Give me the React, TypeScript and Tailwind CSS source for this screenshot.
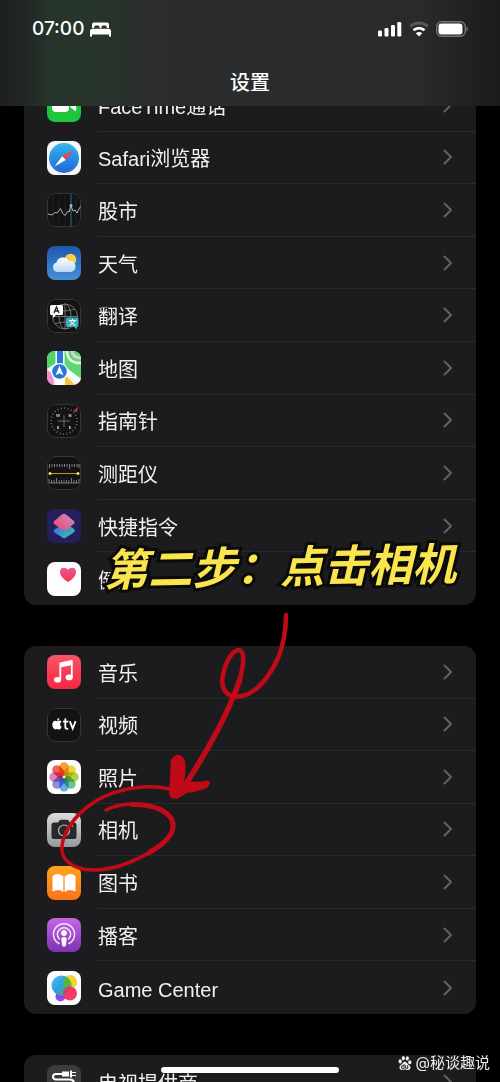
import type { ReactNode } from "react";
import { SiBaidu } from "react-icons/si";

function Tile({ children, className = "" }: { children?: ReactNode; className?: string }) {
  return (
    <svg viewBox="0 0 34 34" aria-hidden="true" className={`size-[34px] shrink-0 rounded-lg ${className}`}>
      {children}
    </svg>
  );
}

const darkTile = "bg-[#131314]";

const TileEdge = () => <rect x=".5" y=".5" width="33" height="33" rx="7.500" fill="none" stroke="#353538" />;

const FaceTimeIcon = () => (
  <Tile className="bg-[#1fc63d]">
    <rect x="5" y="9" width="17" height="15" rx="4" fill="#fff" />
    <path d="M23.500 14.500 28 11.200q1.200-.8 1.200.6v10.400q0 1.400-1.200.6l-4.500-3.300z" fill="#fff" />
  </Tile>
);

const SafariIcon = () => (
  <Tile className="bg-[#f5f6f8]">
    <defs>
      <linearGradient id="safari" x1="0" y1="0" x2="0" y2="1">
        <stop offset="0" stopColor="#35b6ec" />
        <stop offset="1" stopColor="#2263d8" />
      </linearGradient>
    </defs>
    <circle cx="17" cy="17" r="15" fill="url(#safari)" />
    <circle cx="17" cy="17" r="13.300" fill="none" stroke="#a8dcf8" strokeWidth="1" strokeDasharray=".5 1.200" opacity=".5" />
    <path d="M26.500 9.500 15.200 15.200l3.600 3.800z" fill="#f2424a" />
    <path d="M7.500 25.500 15.200 15.200l3.600 3.800z" fill="#fff" />
  </Tile>
);

const StocksIcon = () => (
  <Tile className={darkTile}>
    <path d="M6 2v30M12 2v30M18 2v30M29 2v30" stroke="#252527" strokeWidth=".8" />
    <TileEdge />
    <path d="M24 1v32" stroke="#2b7485" strokeWidth="1" />
    <path d="m1 21 2 .5L5 22l3-2.500 2 .5 3.500-4.500L15.500 20l2.500 2.500 3-4.500 1 1 2-6 2 5 2-1 2 3 2-4 1.500-2.500" fill="none" stroke="#b4b4b6" strokeWidth="1" strokeLinejoin="round" />
    <circle cx="24" cy="12.500" r="1.500" fill="#76c7dc" />
  </Tile>
);

const WeatherIcon = () => (
  <Tile>
    <defs>
      <linearGradient id="sky" x1="0" y1="0" x2="0" y2="1">
        <stop offset="0" stopColor="#1d58ab" />
        <stop offset="1" stopColor="#4591d8" />
      </linearGradient>
      <linearGradient id="cloud" x1="0" y1="0" x2="0" y2="1">
        <stop offset="0" stopColor="#fff" />
        <stop offset="1" stopColor="#b9d8f4" />
      </linearGradient>
    </defs>
    <rect width="34" height="34" fill="url(#sky)" />
    <circle cx="23.500" cy="13.500" r="5.800" fill="#f8d04c" />
    <path d="M10 26a4.900 4.900 0 0 1-.5-9.500 6.600 6.600 0 0 1 12.300-1.500 5.600 5.600 0 1 1 .2 11z" fill="url(#cloud)" />
  </Tile>
);

const TranslateIcon = () => (
  <Tile className={darkTile}>
    <TileEdge />
    <g fill="none" stroke="#77777a" strokeWidth=".9">
      <circle cx="18" cy="17.500" r="12.500" />
      <ellipse cx="18" cy="17.500" rx="6" ry="12.500" />
      <path d="M18 5v25M5.500 17.500h25M8 10q10 4 20 0M8 25q10-4 20 0" />
    </g>
    <path d="M4.500 6h10Q16 6 16 7.500v7q0 1.500-1.500 1.500H9l-3 3v-3H4.500Q3 16 3 14.500v-7Q3 6 4.500 6z" fill="#fafafa" />
    <path d="m7 14 2.500-6 2.500 6M8 12h3" fill="none" stroke="#222" strokeWidth="1.300" />
    <path d="M20.500 18.500h9.500q1.500 0 1.500 1.500v6.500q0 1.500-1.500 1.500v2.500L27 28h-6.500Q19 28 19 26.500V20q0-1.500 1.500-1.500z" fill="#3daebb" />
    <path d="M22 21.500h7M25.500 20v1.500M27.800 21.500q-1 3.300-5.300 4.800M23.200 21.500q1 3.300 5.300 4.800" fill="none" stroke="#fff" strokeWidth="1" />
  </Tile>
);

const MapsIcon = () => (
  <Tile className="bg-[#f3f4f2]">
    <path d="M0 0h9v12L0 18z" fill="#52d267" />
    <path d="M17 0h17v30L17 15z" fill="#5cd873" />
    <path d="M20-1q0 14 15 13" fill="none" stroke="#f3f4f2" strokeWidth="2.500" />
    <path d="M25-1q0 8 10 8" fill="none" stroke="#d0d4cf" strokeWidth="3" />
    <path d="M0 19q7 3 7 15H0z" fill="#ee8ecf" />
    <path d="m18 24 10 10H18z" fill="#f8c43e" />
    <path d="m15 16 20 15" stroke="#fff" strokeWidth="4" />
    <path d="M8.500 0h9v34h-9z" fill="#fff" />
    <path d="M10 0h6v20h-6z" fill="#2779de" />
    <circle cx="12.500" cy="20.500" r="8.500" fill="#fff" />
    <circle cx="12.500" cy="20.500" r="7.300" fill="#2675de" />
    <path d="m12.500 14.800 4 9.500-4-2-4 2z" fill="#fff" />
  </Tile>
);

const CompassIcon = () => (
  <Tile className={darkTile}>
    <TileEdge />
    <circle cx="17" cy="17" r="13" fill="none" stroke="#8a8a8d" strokeWidth="1.600" strokeDasharray=".8 2.600" />
    <path d="M17 11v12M11 17h12" stroke="#6d6d70" strokeWidth="1" />
    <path d="m26.500 7 4.500-4-1 5z" fill="#c93f38" />
    <g fill="#d2d2d4" fontSize="4" fontWeight="700" fontFamily="Inter, sans-serif" textAnchor="middle">
      <text x="11" y="12.500">W</text>
      <text x="23" y="12.500">N</text>
      <text x="11" y="25">S</text>
      <text x="23" y="25">E</text>
    </g>
  </Tile>
);

const MeasureIcon = () => (
  <Tile className={darkTile}>
    <TileEdge />
    <path d="M2.500 8v4M5 8v3M7.500 8v3M10 8v3M12.500 8v3M15 8v3M17.500 8v3M20 8v3M22.500 8v5M25 8v3M27.500 8v3M30 8v3M32 8v4" stroke="#8f8f91" strokeWidth=".9" />
    <path d="M2 27V23M4.500 27v-3M7 27v-3M9.500 27v-5M12 27v-3M14.500 27v-3M17 27v-3M19.500 27v-3M22 27v-3M24.500 27v-5M27 27v-3M29.500 27v-3M32 27v-4M2 27h30" stroke="#858588" strokeWidth=".9" />
    <path d="M3 17.500h28" stroke="#b5982f" strokeWidth="1" />
    <circle cx="3" cy="17.500" r="1.500" fill="#ffde46" />
    <circle cx="31" cy="17.500" r="1.500" fill="#ffde46" />
  </Tile>
);

const ShortcutsIcon = () => (
  <Tile className="bg-[#251f5c]">
    <defs>
      <linearGradient id="shortcutTop" x1="0" y1="1" x2="1" y2="0">
        <stop offset="0" stopColor="#ee4963" />
        <stop offset="1" stopColor="#d088ca" />
      </linearGradient>
      <linearGradient id="shortcutBottom" x1="0" y1="0" x2="1" y2="1">
        <stop offset="0" stopColor="#415ce5" />
        <stop offset="1" stopColor="#43c8b0" />
      </linearGradient>
    </defs>
    <path d="m15.500 28.600-8-5.200q-1.800-1.400 0-2.800L16 14.500l3-.5 8 6q1.800 1.600 0 3.200l-8 5.400q-1.800 1.200-3.500 0z" fill="url(#shortcutBottom)" />
    <path d="m15.500 20.700-8.300-5.800q-1.700-1.400 0-2.800l8-6.800q1.800-1.300 3.600 0l8 6.800q1.700 1.400 0 2.800l-8 5.800q-1.700 1.200-3.300 0z" fill="url(#shortcutTop)" />
  </Tile>
);

const HealthIcon = () => (
  <Tile className="bg-[#fdfdfd]">
    <defs>
      <linearGradient id="heart" x1="0" y1="0" x2="0" y2="1">
        <stop offset="0" stopColor="#f1559a" />
        <stop offset="1" stopColor="#ef3b42" />
      </linearGradient>
    </defs>
    <path d="M21 20q-8-5-8-9.800Q13 5.800 17 5.800q2.500 0 4 1.800 1.500-1.800 4-1.800 4 0 4 4.400 0 4.800-8 9.800z" fill="url(#heart)" />
  </Tile>
);

const MusicIcon = () => (
  <Tile>
    <defs>
      <linearGradient id="music" x1="0" y1="0" x2="0" y2="1">
        <stop offset="0" stopColor="#fb5568" />
        <stop offset="1" stopColor="#f52746" />
      </linearGradient>
    </defs>
    <rect width="34" height="34" fill="url(#music)" />
    <path d="M13.300 24V8.500l11.500-2.500v16" fill="none" stroke="#fff" strokeWidth="1.800" strokeLinejoin="round" />
    <path d="m13 8 12-2.500V10l-12 2.500z" fill="#fff" />
    <ellipse cx="10.600" cy="24.700" rx="3.600" ry="2.800" fill="#fff" />
    <ellipse cx="22.200" cy="22.400" rx="3.600" ry="2.800" fill="#fff" />
  </Tile>
);

const TvIcon = () => (
  <Tile className={darkTile}>
    <TileEdge />
    <path d="M10 13.200q1.200-.6 2.400-.6 1.200 0 2.100 1.100-1.500 1-1.400 2.700.1 1.600 1.600 2.400-.9 2.400-2.400 2.700-.8 0-1.900-.5-1.200-.2-2.200.5Q5.500 20.500 5.300 16.500q.2-3.500 2.900-3.800.8 0 1.800.5zM9.900 12.700q.1-2.400 2.600-2.900-.1 2.400-2.600 2.900z" fill="#fff" />
    <path d="M18.300 10.500v8q0 2.300 2 2.300h.9M16 13.700h5.200M22.800 13.200l2.900 7.300 2.900-7.300" fill="none" stroke="#fff" strokeWidth="1.800" />
  </Tile>
);

const petals = ["#f9a13a", "#f0db3c", "#b3d54a", "#6cc696", "#68b0e8", "#938fe0", "#dd86c0", "#f4605a"];

const PhotosIcon = () => (
  <Tile className="bg-[#fdfdfd]">
    {petals.map((color, i) => (
      <rect key={color} x="12.300" y="2.300" width="9.400" height="13.700" rx="4.700" fill={color} className="mix-blend-multiply" transform={`rotate(${i * 45} 17 17)`} />
    ))}
  </Tile>
);

const CameraIcon = () => (
  <Tile>
    <defs>
      <linearGradient id="camera" x1="0" y1="0" x2="0" y2="1">
        <stop offset="0" stopColor="#dcdcde" />
        <stop offset="1" stopColor="#98989c" />
      </linearGradient>
    </defs>
    <rect width="34" height="34" fill="url(#camera)" />
    <path d="M7 9.500h4l1.500-2q.5-.7 1.500-.7h6q1 0 1.500.7l1.500 2h4q2.500 0 2.500 2.500v11.500q0 2.500-2.500 2.500H7q-2.500 0-2.500-2.500V12Q4.500 9.500 7 9.500z" fill="#29292b" />
    <circle cx="17" cy="17.500" r="5.500" fill="none" stroke="#bdbdc0" strokeWidth="1.200" />
    <circle cx="25.500" cy="13" r=".8" fill="#e5b72c" />
  </Tile>
);

const BooksIcon = () => (
  <Tile>
    <defs>
      <linearGradient id="books" x1="0" y1="0" x2="0" y2="1">
        <stop offset="0" stopColor="#ffa51d" />
        <stop offset="1" stopColor="#f8731b" />
      </linearGradient>
    </defs>
    <rect width="34" height="34" fill="url(#books)" />
    <path d="M16.400 26V10.500Q14 8 11 8q-3.500 0-5.500 2.300v15.200q2.300-1.500 5.500-1.500 3 0 5.400 2zM17.600 26V10.500Q20 8 23 8q3.500 0 5.500 2.300v15.200Q26.200 24 23 24q-3 0-5.400 2z" fill="#fff" />
  </Tile>
);

const PodcastsIcon = () => (
  <Tile>
    <defs>
      <linearGradient id="podcasts" x1="0" y1="0" x2="0" y2="1">
        <stop offset="0" stopColor="#c367e4" />
        <stop offset="1" stopColor="#7c33b5" />
      </linearGradient>
    </defs>
    <rect width="34" height="34" fill="url(#podcasts)" />
    <g fill="none" stroke="#f5e3fb" strokeWidth="1.500" strokeLinecap="round">
      <path d="M12 25.500a10.500 10.500 0 1 1 10 0" />
      <path d="M12.300 21a6.600 6.600 0 1 1 9.400 0" />
    </g>
    <circle cx="17" cy="15" r="2.900" fill="#fff" />
    <path d="M14.300 20.500q0-1.500 2.700-1.500t2.700 1.500l-.7 6.500q-.2 1.700-2 1.700t-2-1.700z" fill="#fff" />
  </Tile>
);

const GameCenterIcon = () => (
  <Tile className="bg-[#fdfdfd]">
    <defs>
      <linearGradient id="bubble" x1="0" y1="0" x2="1" y2="1">
        <stop offset="0" stopColor="#49bdf5" />
        <stop offset=".5" stopColor="#339ddb" />
        <stop offset="1" stopColor="#46bb46" />
      </linearGradient>
      <linearGradient id="purple" x1="0" y1="0" x2="0" y2="1">
        <stop offset="0" stopColor="#5a4cdf" />
        <stop offset="1" stopColor="#b24bee" />
      </linearGradient>
    </defs>
    <circle cx="23" cy="11" r="7" fill="#f4d52d" />
    <circle cx="13.500" cy="25.500" r="5" fill="url(#purple)" />
    <circle cx="14.500" cy="14.500" r="10" fill="url(#bubble)" />
    <path d="M16.200 12.500a7 7 0 0 1 1.500-6q6.500 2.200 6.800 9-5.800 2.500-8.300-3z" fill="#57b832" />
    <circle cx="23" cy="22.500" r="7" fill="#f43c67" />
    <path d="M16 22.500a7 7 0 0 1 8-7q-1.500 7-7.500 8.700z" fill="#cc4463" />
  </Tile>
);

const TvProviderIcon = () => (
  <Tile className="bg-[#3b3b3e]">
    <path d="M17 9H9q-3 0-3 2.700T9 14.500h14q4 0 4 4" fill="none" stroke="#fff" strokeWidth="2" />
    <path d="M15 6.500h7v5h-7zM23 5.500h2v7h-2z" fill="#fff" />
    <path d="M25 7.500h4M25 10.500h4" stroke="#fff" strokeWidth="1" />
  </Tile>
);

type Item = { label: string; icon: ReactNode };

const systemApps: Item[] = [
  { label: "FaceTime通话", icon: <FaceTimeIcon /> },
  { label: "Safari浏览器", icon: <SafariIcon /> },
  { label: "股市", icon: <StocksIcon /> },
  { label: "天气", icon: <WeatherIcon /> },
  { label: "翻译", icon: <TranslateIcon /> },
  { label: "地图", icon: <MapsIcon /> },
  { label: "指南针", icon: <CompassIcon /> },
  { label: "测距仪", icon: <MeasureIcon /> },
  { label: "快捷指令", icon: <ShortcutsIcon /> },
  { label: "健康", icon: <HealthIcon /> },
];

const mediaApps: Item[] = [
  { label: "音乐", icon: <MusicIcon /> },
  { label: "视频", icon: <TvIcon /> },
  { label: "照片", icon: <PhotosIcon /> },
  { label: "相机", icon: <CameraIcon /> },
  { label: "图书", icon: <BooksIcon /> },
  { label: "播客", icon: <PodcastsIcon /> },
  { label: "Game Center", icon: <GameCenterIcon /> },
];

const providers: Item[] = [{ label: "电视提供商", icon: <TvProviderIcon /> }];

function Group({ items, className }: { items: Item[]; className: string }) {
  return (
    <ul className={`grid shrink-0 auto-rows-fr overflow-hidden rounded-xl bg-[#1c1c1e] ${className}`}>
      {items.map((item, i) => (
        <li key={item.label} className="grid">
          <a href="#" className="flex items-center gap-[17px] pl-[23px]">
            {item.icon}
            <span
              className={`flex flex-1 items-center justify-between self-stretch pr-[23px] font-['Liberation_Sans','Noto_Sans_CJK_SC',sans-serif] text-[20px] leading-6 text-[#f0f0f1] ${
                i < items.length - 1 ? "border-b border-[#2a2a2c]" : ""
              }`}
            >
              <span className="pt-1">{item.label}</span>
              <svg viewBox="0 0 10 16" aria-hidden="true" className="h-4 w-2.5 text-[#626266]">
                <path d="m1.500 1.500 6.500 6.500-6.500 6.500" fill="none" stroke="currentColor" strokeWidth="2" strokeLinecap="round" strokeLinejoin="round" />
              </svg>
            </span>
          </a>
        </li>
      ))}
    </ul>
  );
}

function StatusBar() {
  return (
    <div className="flex items-center justify-between px-8 pt-[17px]">
      <div className="flex items-center gap-1.5">
        <time className="text-[19px] leading-6 font-medium">07:00</time>
        <svg viewBox="0 0 21 15" aria-hidden="true" className="h-[15px] w-[21px]" fill="#fff">
          <path d="M2 6V2.500Q2 .5 4 .5h13q2 0 2 2V6h-2.200V5q0-1.500-1.500-1.500h-2.500q-1.300 0-1.300 1.500v1h-2V5q0-1.500-1.300-1.500H5.700Q4.200 3.500 4.200 5v1z" />
          <path d="M2.500 6.800h16Q21 6.800 21 9.300V14q0 .7-.7.700h-.6q-.7 0-.7-.7v-1.500H2V14q0 .7-.7.700H.7Q0 14.700 0 14V9.300q0-2.500 2.500-2.500z" />
        </svg>
      </div>
      <div className="flex items-center gap-[7px]">
        <svg viewBox="0 0 24 16" aria-hidden="true" className="h-4 w-6" fill="#fff">
          <rect x="0" y="9.500" width="4" height="6" rx="1.200" />
          <rect x="6.500" y="7" width="4" height="8.500" rx="1.200" />
          <rect x="13" y="4" width="4" height="11.500" rx="1.200" />
          <rect x="19.300" y="1" width="4" height="14.500" rx="1.200" />
        </svg>
        <svg viewBox="0 0 20 16" aria-hidden="true" className="h-4 w-5" fill="none" strokeWidth="2.800">
          <path d="M1.300 5.500a12.500 12.500 0 0 1 17.400 0" stroke="#58595a" />
          <path d="M4.500 9.300a8 8 0 0 1 11 0" stroke="#fff" />
          <path d="M10 15.500 6.800 12.200q3.200-2.600 6.400 0z" fill="#fff" />
        </svg>
        <svg viewBox="0 0 32 16" aria-hidden="true" className="h-4 w-8">
          <rect x=".7" y=".7" width="28.600" height="14.600" rx="5" fill="none" stroke="#737475" strokeWidth="1.400" />
          <rect x="2.500" y="2.500" width="24" height="11" rx="3" fill="#fff" />
          <path d="M30.500 5.500q1.500.8 1.500 2.500t-1.500 2.500z" fill="#737475" />
        </svg>
      </div>
    </div>
  );
}

export default function App() {
  return (
    <div className="relative flex h-screen flex-col overflow-hidden bg-black font-['Inter','Noto_Sans_CJK_SC',sans-serif] text-white">
      <header className="z-10 flex h-[106px] shrink-0 flex-col bg-[linear-gradient(90deg,#1e201f_0%,#222724_5%,#26342b_10%,#27352b_19%,#2b2d2c_30%,#2a2b2d_50%,#292a2c_84%,#1b1b1c_100%)]">
        <StatusBar />
        <h1 className="mt-7 text-center text-[20px] leading-7 font-medium">设置</h1>
      </header>

      <main className="-mt-[27px] flex flex-col gap-[41px] px-6">
        <Group items={systemApps} className="min-h-[526px]" />
        <Group items={mediaApps} className="min-h-[368px]" />
        <Group items={providers} className="min-h-[53px]" />
      </main>

      <p className="absolute top-[541px] left-[104px] -rotate-1 text-[44px] leading-[52px] font-bold whitespace-nowrap text-[#fbe54e] italic [-webkit-text-stroke:6px_#0b0b0b] [paint-order:stroke_fill]">
        第二步：点击相机
      </p>

      <svg viewBox="0 600 300 280" aria-hidden="true" className="pointer-events-none absolute top-[600px] left-0 h-[280px] w-[300px]" fill="none" stroke="#c00a18" strokeLinecap="round" strokeLinejoin="round">
        <path d="M286 615C286 632 283 646 278 658C269 678 256 693 242 696C226 699 220 688 223 675C226 660 233 650 239 650C246 651 243 668 239 682" strokeWidth="4.500" />
        <path d="M240 679C229 712 206 753 184 787" strokeWidth="5.500" />
        <path d="M171.700 760Q178 751 184 760Q186 772 183 783L203 782Q213 780 207 786.700Q198 791 187 792L177 798Q169 799 170 791Z" fill="#c00a18" strokeWidth="1.500" />
        <path d="M170 789C145 783 110 789 87 807C66 824 54 850 68 862C80 873 105 872 128 863C152 853 174 840 173 824C172 814 158 806 142 805C127 803 114 806 106 810" strokeWidth="3.500" />
        <path d="M132 804.500C158 804 172 814 173 824C174 834 164 844 150 852" strokeWidth="5" />
      </svg>

      <div className="absolute bottom-[9px] left-1/2 h-1.5 w-[178px] -translate-x-1/2 rounded-full bg-white" />
      <div className="absolute right-2.5 bottom-[9px] flex items-center gap-1 text-[15px] leading-5 text-[#eeeeef]">
        <SiBaidu aria-hidden="true" className="size-3.5" />
        <span>@秘谈趣说</span>
      </div>
    </div>
  );
}
